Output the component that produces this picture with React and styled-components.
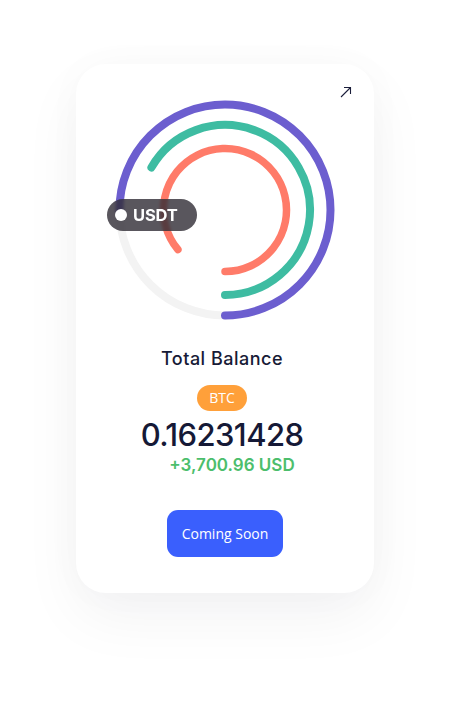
import React from "react";
import styled, { createGlobalStyle } from "styled-components";

const Global = createGlobalStyle`
  html, body { margin: 0; padding: 0; background: #ffffff; }
  body { font-family: "Inter", "Noto Sans", sans-serif; }
`;

const Page = styled.div`
  display: flex;
  justify-content: center;
  padding-top: 64px;
  height: 723px;
  box-sizing: border-box;
`;

const Card = styled.div`
  position: relative;
  width: 298px;
  height: 529px;
  box-sizing: border-box;
  background: #ffffff;
  border-radius: 30px;
  display: flex;
  flex-direction: column;
  align-items: center;
  box-shadow: 0 24px 60px rgba(20, 20, 40, 0.05), 0 0 40px rgba(20, 20, 40, 0.025);
  &::before {
    content: "";
    position: absolute;
    left: 14px;
    right: 14px;
    bottom: -8px;
    height: 80px;
    border-radius: 30px;
    background: #f2f2f2;
    z-index: -1;
    box-shadow: 0 24px 50px rgba(20, 20, 40, 0.07);
  }
`;

const TopBar = styled.div`
  align-self: stretch;
  display: flex;
  justify-content: flex-end;
  padding: 22px 22px 0;
  height: 13px;
`;

const ExpandButton = styled.button`
  border: 0;
  background: none;
  padding: 0;
  width: 12px;
  height: 12px;
  display: block;
  cursor: pointer;
`;

const ChartWrap = styled.div`
  position: relative;
  width: 220px;
  height: 220px;
  margin-top: 1px;
`;

const Badge = styled.div`
  position: absolute;
  left: -8px;
  top: 99px;
  width: 90px;
  height: 32px;
  box-sizing: border-box;
  border-radius: 16px;
  background: rgba(48, 44, 52, 0.8);
  backdrop-filter: blur(1.5px);
  display: flex;
  align-items: center;
  gap: 6px;
  padding-left: 8px;
  color: #ffffff;
  font-family: "Inter", sans-serif;
  font-weight: 700;
  font-size: 16.5px;
  letter-spacing: -0.2px;
`;

const Dot = styled.span`
  width: 12px;
  height: 12px;
  border-radius: 50%;
  background: #ffffff;
`;

const Info = styled.div`
  display: flex;
  flex-direction: column;
  align-items: center;
  padding-right: 6px;
`;

const Title = styled.div`
  margin-top: 27px;
  font-family: "Inter", sans-serif;
  font-weight: 500;
  font-size: 18px;
  line-height: 24px;
  color: #171a36;
  letter-spacing: 0.5px;
`;

const Pill = styled.div`
  margin-top: 14px;
  height: 26px;
  padding: 0 12px;
  border-radius: 13px;
  background: ${(p) => p.$bg};
  color: #ffffff;
  font-family: "Open Sans", sans-serif;
  font-size: 14px;
  line-height: 26px;
`;

const Amount = styled.div`
  margin-top: 6px;
  font-family: "Inter", sans-serif;
  font-weight: 500;
  font-size: 31px;
  line-height: 36px;
  letter-spacing: -0.6px;
  color: #151936;
`;

const Change = styled.div`
  padding-left: 20px;
  margin-top: 1px;
  font-family: "Inter", sans-serif;
  font-weight: 600;
  font-size: 17px;
  line-height: 22px;
  color: #4cbe6c;
`;

const ActionButton = styled.button`
  margin-top: 34px;
  width: 116px;
  height: 47px;
  border: 0;
  border-radius: 11px;
  background: #3a5ffd;
  color: #ffffff;
  font-family: "Open Sans", sans-serif;
  font-size: 14px;
  cursor: pointer;
`;

const C = 110;

function arcPath(r, fromDeg, toDeg) {
  const rad = (d) => (d * Math.PI) / 180;
  const x1 = C + r * Math.cos(rad(fromDeg));
  const y1 = C + r * Math.sin(rad(fromDeg));
  const x2 = C + r * Math.cos(rad(toDeg));
  const y2 = C + r * Math.sin(rad(toDeg));
  const span = Math.abs(fromDeg - toDeg);
  const large = span > 180 ? 1 : 0;
  const sweep = toDeg < fromDeg ? 0 : 1;
  return `M ${x1.toFixed(2)} ${y1.toFixed(2)} A ${r} ${r} 0 ${large} ${sweep} ${x2.toFixed(2)} ${y2.toFixed(2)}`;
}

const rings = [
  { r: 105.5, from: 90, to: -180, color: "#6c5ecf", w: 8 },
  { r: 85, from: 90, to: -150, color: "#3ebca2", w: 8 },
  { r: 61.5, from: 90, to: -220, color: "#ff7b69", w: 7.5 },
];

export default function App() {
  return (
    <>
      <Global />
      <Page>
        <Card>
          <TopBar>
            <ExpandButton aria-label="expand">
              <svg width="12" height="12" viewBox="0 0 12 12" fill="none">
                <path d="M1 11 L10.5 1.5 M4 1.5 H10.5 V8" stroke="#1a1d3a" strokeWidth="1.1" />
              </svg>
            </ExpandButton>
          </TopBar>
          <ChartWrap>
            <svg width="220" height="220" viewBox="0 0 220 220">
              <path d={arcPath(105.5, 180, 90)} stroke="#f3f3f3" strokeWidth="8" fill="none" strokeLinecap="round" />
              {rings.map((ring) => (
                <path
                  key={ring.r}
                  d={arcPath(ring.r, ring.from, ring.to)}
                  stroke={ring.color}
                  strokeWidth={ring.w}
                  fill="none"
                  strokeLinecap="round"
                />
              ))}
            </svg>
            <Badge>
              <Dot />
              USDT
            </Badge>
          </ChartWrap>
          <Info>
            <Title>Total Balance</Title>
            <Pill $bg="#ffa03a">BTC</Pill>
            <Amount>0.16231428</Amount>
            <Change>+3,700.96 USD</Change>
          </Info>
          <ActionButton>Coming Soon</ActionButton>
        </Card>
      </Page>
    </>
  );
}
